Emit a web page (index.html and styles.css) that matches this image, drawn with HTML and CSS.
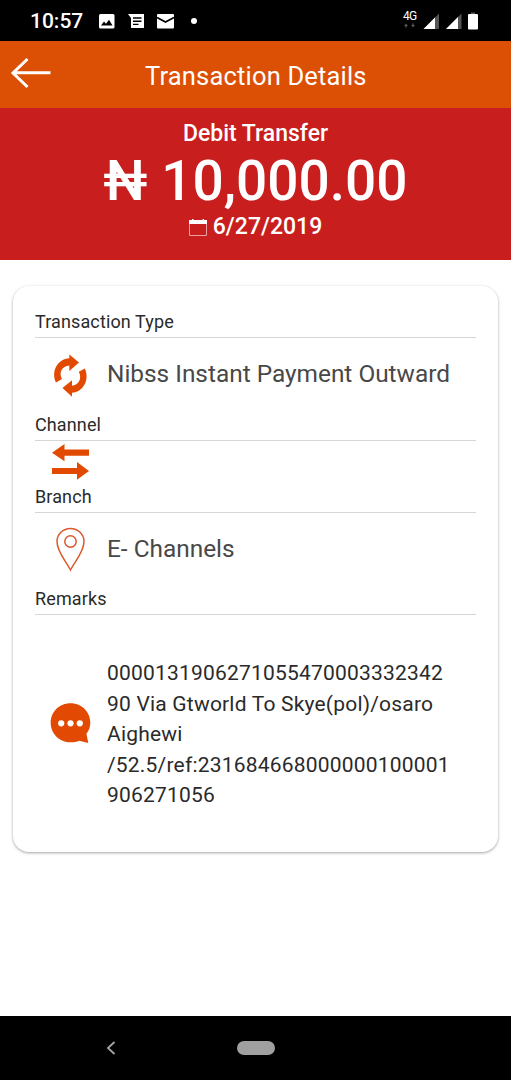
FILE: index.html
```html
<!DOCTYPE html>
<html lang="en">
<head>
<meta charset="utf-8">
<title>Transaction Details</title>
<link rel="stylesheet" href="styles.css">
</head>
<body>
<div class="status">
  <span class="clock">10:57</span>
  <svg class="status-left" width="104" height="20" viewBox="98 10 104 20">
    <rect x="99" y="13" width="15.500" height="14.500" rx="1.500" fill="#fff"/>
    <path d="M101 24.500l3-4 2 2.300 3-4 3.500 5.700z" fill="#000"/>
    <path d="M128 13h16v14h-13V17z" fill="#fff"/>
    <path d="M133 17h8.500M133 20.200h8.500M133 23.400h5.500" stroke="#000" stroke-width="1.400"/>
    <rect x="157" y="13" width="17" height="14.500" rx="1" fill="#fff"/>
    <path d="M157 16.500l8.500 4.500 8.500-4.500" fill="none" stroke="#000" stroke-width="1.700"/>
    <circle cx="194" cy="20" r="3" fill="#fff"/>
  </svg>
  <div class="network">
    <span class="network-type">4G</span>
    <svg width="14" height="5" viewBox="0 0 14 5"><path d="M1 3l2-2.500L5 3zM2.300 3h1.400v1.500H2.300zM8 2h4L10 4.500zM9.300.5h1.400V2H9.300z" fill="#555"/></svg>
  </div>
  <svg class="signals" width="58" height="20" viewBox="422 10 58 20">
    <path d="M423.500 28L439 12.500V28z" fill="#555"/><path d="M423.500 28L435 16.500V28z" fill="#fff"/>
    <path d="M446 28l15.500-15.500V28z" fill="#555"/><path d="M446 28l12-12V28z" fill="#fff"/>
    <path d="M471 11.500h4V13h-4z" fill="#555"/><rect x="468" y="13" width="10" height="15.500" rx="1" fill="#fff"/>
  </svg>
</div>
<header class="header">
  <svg class="back" width="42" height="34" viewBox="0 0 42 34"><path d="M17.500 3L3 17l14.500 14M3 16.800H40.500" fill="none" stroke="#fff" stroke-width="3"/></svg>
  <h1 class="title">Transaction Details</h1>
</header>
<section class="summary">
  <div class="kind">Debit Transfer</div>
  <div class="amount">₦ 10,000.00</div>
  <div class="date">
    <svg width="18" height="19" viewBox="0 0 18 19"><path d="M.5 2.500h17v15H.5z" fill="none" stroke="#f0a0a0"/><path d="M0 2h3V1h1.500v1h9V1H15v1h3v4H0z" fill="#fff"/></svg>
    <span>6/27/2019</span>
  </div>
</section>
<main class="card">
  <h2 class="label">Transaction Type</h2>
  <div class="row">
    <svg class="icon" width="40" height="44" viewBox="50 352 40 44" fill="#e24a03">
      <path d="M69.300 353.500v3.700C57.500 358 50.800 370 56 381.500l6-3.400C58.500 371.500 62 365 69.300 364.500v5.500L79 361.500z"/>
      <path d="M72 395.700v-4C83.500 391 90 378.500 84.800 367.500l-6 3.200c3.500 6.500-.1 13.500-6.800 14v-5.500L62.500 387z"/>
    </svg>
    <span class="value">Nibss Instant Payment Outward</span>
  </div>
  <h2 class="label">Channel</h2>
  <div class="row row-short">
    <svg class="icon" width="40" height="38" viewBox="50 443 40 38" fill="#e24a03">
      <path d="M52 452.700l12.500-8.700v5.500H89v6.200H64.500v5.500zM52 468h25v-6l12 9-12 8.800V474H52z"/>
    </svg>
  </div>
  <h2 class="label">Branch</h2>
  <div class="row row-branch">
    <svg class="icon" width="40" height="44" viewBox="50 527 40 44" fill="none" stroke="#d95a2b" stroke-width="1.500">
      <path d="M70.500 570C66 561 57 552 57 541.500a13.500 13 0 0 1 27 0C84 552 75 561 70.500 570z"/><circle cx="70.500" cy="541.500" r="5.700"/>
    </svg>
    <span class="value">E- Channels</span>
  </div>
  <h2 class="label">Remarks</h2>
  <div class="row row-remarks">
    <svg class="icon icon-chat" width="40" height="42" viewBox="50 702 40 42">
      <path d="M70.500 703.300c11 0 19.800 8.500 19.800 19.200 0 4.700-1.300 8-3.900 11.200l1.900 9.300-9-2.200c-2.600 1-5.500 1.500-8.800 1.500-11 0-19.800-8.500-19.800-19.600s8.800-19.400 19.800-19.400z" fill="#e24a03"/>
      <g fill="#fff"><circle cx="61.200" cy="723.300" r="3.100"/><circle cx="70.500" cy="723.300" r="3.100"/><circle cx="79.800" cy="723.300" r="3.100"/></g>
    </svg>
    <p class="remarks">0000131906271055470003332342<br>90 Via Gtworld To Skye(pol)/osaro<br>Aighewi<br>/52.5/ref:231684668000000100001<br>906271056</p>
  </div>
</main>
<nav class="nav">
  <svg class="nav-back" width="12" height="16" viewBox="0 0 12 16"><path d="M9.500 2L3 8l6.500 6" fill="none" stroke="#a5a5a5" stroke-width="1.800"/></svg>
  <span class="pill"></span>
</nav>
</body>
</html>
```
FILE: styles.css
```css
* { box-sizing: border-box; }
body {
  margin: 0;
  height: 1080px;
  display: flex;
  flex-direction: column;
  background: #fff;
  color: #2a2a2a;
  font-family: Roboto, "Noto Sans", sans-serif;
  overflow: hidden;
}
h1, h2, p { margin: 0; font-weight: 400; }
svg { display: block; flex: none; }
.status {
  height: 41px;
  padding: 0 31px 0 30px;
  display: flex;
  align-items: center;
  background: #000;
  color: #fff;
}
.clock { width: 68px; font-size: 21px; font-weight: 500; line-height: 40px; }
.network { margin: 0 -1px 4px auto; width: 20px; display: flex; flex-direction: column; gap: 1px; }
.network-type { font-size: 12px; line-height: 12px; letter-spacing: -.8px; }
.header {
  height: 67px;
  padding-left: 10px;
  display: flex;
  align-items: center;
  background: #dc5006;
  color: #fff;
}
.back { margin-bottom: 3px; }
.title { margin-left: 93px; padding-top: 2px; font-size: 25.5px; letter-spacing: .18px; white-space: nowrap; }
.summary {
  height: 152px;
  display: flex;
  flex-direction: column;
  align-items: center;
  background: #c91e1e;
  color: #fff;
  font-weight: 500;
  white-space: nowrap;
}
.kind { padding-top: 11px; font-size: 23px; line-height: 30px; }
.amount { font-size: 55px; line-height: 64px; }
.date { display: flex; align-items: center; gap: 6px; font-size: 23px; line-height: 28px; }
.card {
  width: 485px;
  height: 566px;
  margin: 26px 13px 0;
  padding: 22px 22px 0;
  border-radius: 16px;
  box-shadow: 0 1px 3px rgba(0, 0, 0, .36);
}
.label {
  height: 30px;
  border-bottom: 1px solid #d6d6d6;
  font-size: 18px;
  line-height: 28px;
  letter-spacing: .12px;
}
.row { height: 73px; padding-left: 15px; display: flex; align-items: center; }
.row-short { height: 42px; }
.row-branch { height: 72px; }
.row-remarks { height: 237px; }
.icon { margin-right: 17px; overflow: visible; }
.icon-chat { margin-bottom: 22px; }
.value { padding-bottom: 2px; font-size: 24.4px; color: #484848; white-space: nowrap; }
.remarks { padding-top: 2px; font-size: 21px; line-height: 30.5px; letter-spacing: .2px; white-space: nowrap; }
.nav {
  height: 64px;
  margin-top: auto;
  padding-left: 105px;
  display: flex;
  align-items: center;
  background: #000;
}
.pill { width: 38px; height: 14px; margin-left: 120px; border-radius: 7px; background: #a0a0a0; }
```
